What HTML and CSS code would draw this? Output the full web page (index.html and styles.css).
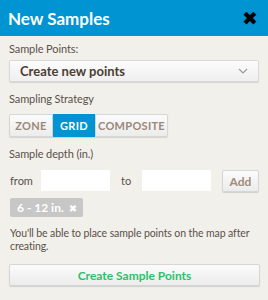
FILE: index.html
```html
<!DOCTYPE html>
<html lang="en">

<head>
  <meta charset="UTF-8">
  <meta name="viewport" content="width=device-width, initial-scale=1.0">
  <title>New Samples</title>
  <link rel="stylesheet" href="styles.css">
</head>

<body>

  <div class="panel">
    <div class="panel-header">
      <h1>New Samples</h1>
      <span class="close">&#10006;</span>
    </div>

    <div class="panel-body">
      <label class="lbl lbl-first">Sample Points:</label>
      <div class="select">
        <span>Create new points</span>
        <svg width="10" height="6" viewBox="0 0 10 6"><path d="M1 1l4 4 4-4" fill="none" stroke="#9a9a9a" stroke-width="1.2"/></svg>
      </div>

      <label class="lbl">Sampling Strategy</label>
      <div class="segment">
        <button class="seg seg-zone">ZONE</button>
        <button class="seg seg-grid active">GRID</button>
        <button class="seg seg-comp">COMPOSITE</button>
      </div>

      <label class="lbl">Sample depth (in.)</label>
      <div class="depth-row">
        <span class="depth-lbl">from</span>
        <input type="text" class="depth-input">
        <span class="depth-lbl to">to</span>
        <input type="text" class="depth-input">
        <button class="btn btn-add">Add</button>
      </div>

      <div class="tags">
        <span class="tag">6 - 12 in. <span class="tag-x">&#10006;</span></span>
      </div>

      <p class="note">You'll be able to place sample points on the map after creating.</p>

      <button class="btn btn-create">Create Sample Points</button>
    </div>
  </div>

</body>

</html>
```

FILE: styles.css
```css
body {
  margin: 0;
  padding: 0;
  font-family: Lato, 'Noto Sans', sans-serif;
  background-color: #f2f0ea;
  color: #5a514b;
}

.panel {
  width: 268px;
  height: 300px;
  background-color: #f2f0ea;
}

.panel-header {
  height: 36px;
  background-color: #0094d2;
  display: flex;
  align-items: center;
  justify-content: space-between;
  padding: 0 10px 0 8px;
}

.panel-header h1 {
  margin: 0;
  color: #fff;
  font-size: 17px;
  font-weight: bold;
}

.close {
  color: #000;
  font-size: 19px;
  line-height: 1;
  font-family: 'DejaVu Sans', sans-serif;
}

.panel-body {
  display: flex;
  flex-direction: column;
  padding: 6px 9px 0 9px;
}

.lbl {
  display: block;
  font-size: 11px;
  line-height: 14px;
  letter-spacing: -0.1px;
  color: #5a514b;
  margin-top: 10px;
}

.lbl-first {
  margin-top: 0;
}

.select {
  margin-top: 4px;
  height: 22px;
  box-sizing: border-box;
  border: 1px solid #d9d9d9;
  border-radius: 2px;
  background: linear-gradient(#fcfcfc, #efefef);
  box-shadow: 0 1px 1px rgba(0, 0, 0, 0.12);
  display: flex;
  align-items: center;
  justify-content: space-between;
  padding: 0 10px 0 10px;
  font-size: 13px;
  font-weight: bold;
  color: #4b3d33;
}

.segment {
  margin-top: 8px;
  display: flex;
}

.seg {
  height: 23px;
  box-sizing: border-box;
  border: 1px solid #d6d6d6;
  background: linear-gradient(#fbfbfb, #ececec);
  box-shadow: 0 1px 1px rgba(0, 0, 0, 0.12);
  font-family: Lato, 'Noto Sans', sans-serif;
  font-size: 11px;
  font-weight: bold;
  letter-spacing: 0.3px;
  color: #9a8878;
  padding: 0;
  margin: 0;
}

.seg-zone {
  width: 44px;
  border-radius: 2px 0 0 2px;
}

.seg-grid {
  width: 42px;
}

.seg-comp {
  width: 73px;
  border-radius: 0 2px 2px 0;
}

.seg.active {
  background: #0094d2;
  border-color: #0094d2;
  color: #fff;
}

.depth-row {
  margin-top: 9px;
  display: flex;
  align-items: flex-start;
}

.depth-lbl {
  font-size: 11px;
  line-height: 21px;
  margin-left: 1px;
  width: 31px;
}

.depth-lbl.to {
  margin-left: 11px;
  width: 21px;
}

.depth-input {
  width: 69px;
  height: 21px;
  box-sizing: border-box;
  border: none;
  background: #fff;
  padding: 0;
  margin: 0;
}

.btn {
  box-sizing: border-box;
  border: 1px solid #d6d6d6;
  border-radius: 2px;
  background: linear-gradient(#fbfbfb, #ececec);
  box-shadow: 0 1px 1px rgba(0, 0, 0, 0.14);
  font-family: Lato, 'Noto Sans', sans-serif;
  font-weight: bold;
  padding: 0;
}

.btn-add {
  margin-left: 11px;
  width: 37px;
  height: 22px;
  font-size: 12px;
  color: #a08c7a;
}

.tags {
  margin-top: 6px;
  display: flex;
}

.tag {
  margin-left: 1px;
  height: 19px;
  line-height: 19px;
  padding: 0 6px 0 7px;
  background: #c7c7c7;
  border-radius: 2px;
  color: #fff;
  font-size: 12px;
  font-weight: bold;
}

.tag-x {
  font-family: 'DejaVu Sans', sans-serif;
  font-size: 10px;
  margin-left: 2px;
}

.note {
  margin: 10px 0 0 1px;
  font-size: 10.5px;
  line-height: 13px;
  letter-spacing: -0.1px;
  color: #5a514b;
}

.btn-create {
  margin-top: 11px;
  width: 251px;
  height: 22px;
  font-size: 12px;
  color: #2ebf6a;
}
```
